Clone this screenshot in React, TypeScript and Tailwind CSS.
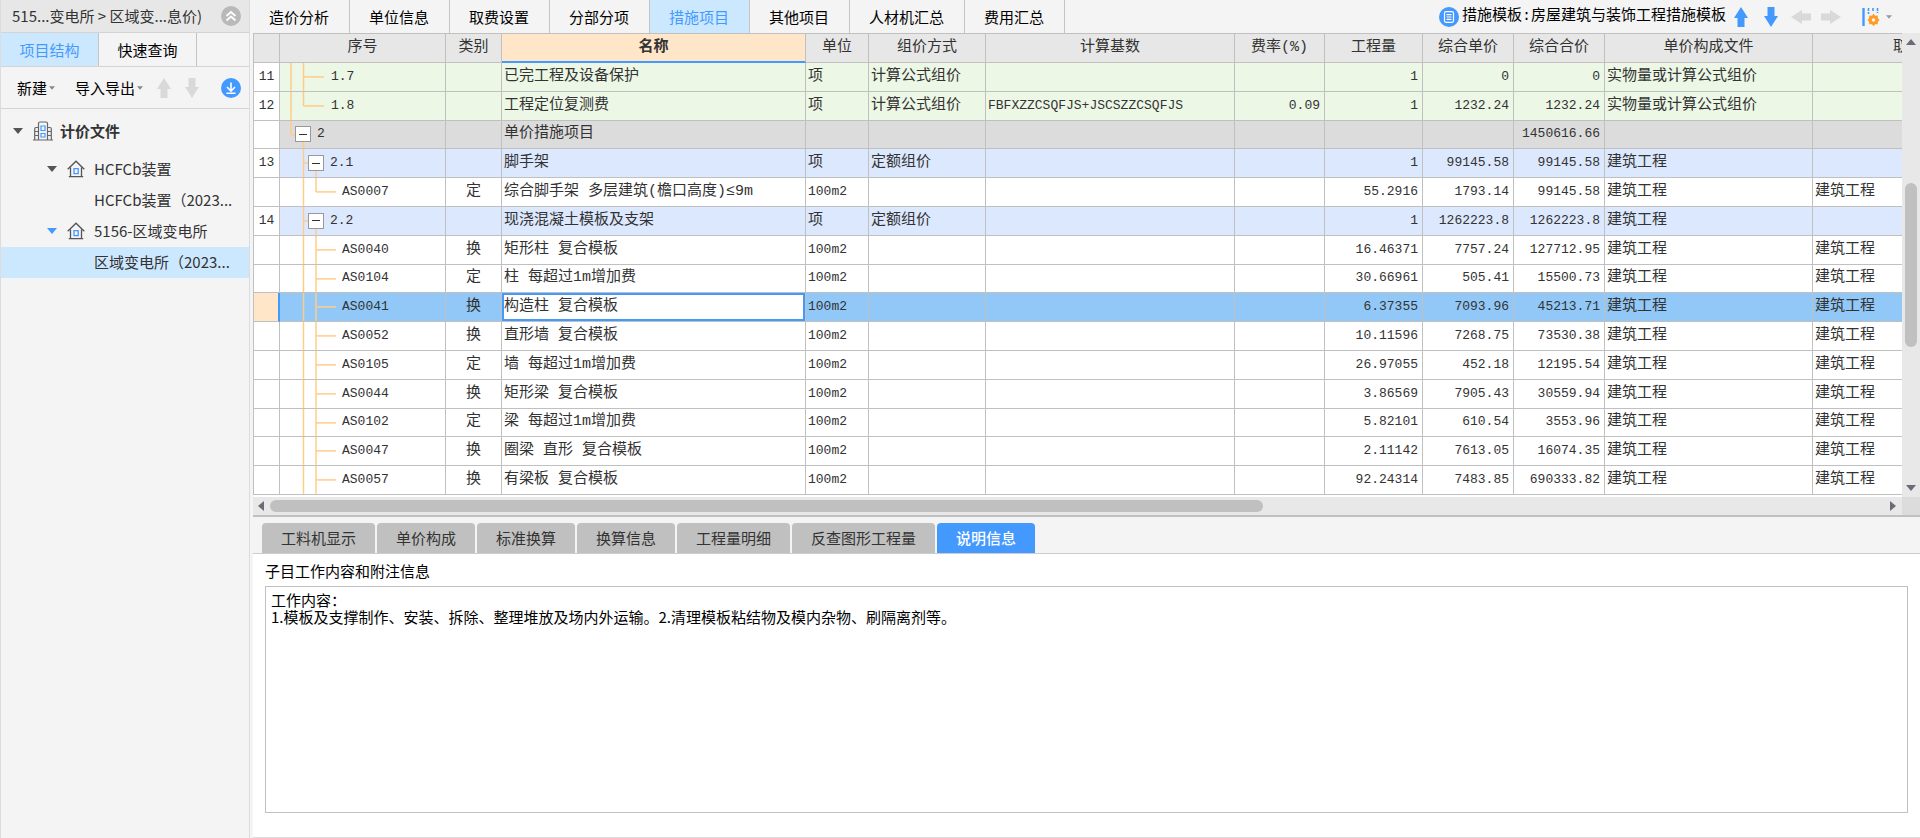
import { ReactNode } from "react";
import clsx from "clsx";

type Level = "leaf1" | "group1" | "group2" | "leaf2";

interface Row {
  no?: string;
  level: Level;
  last?: boolean;
  code: string;
  kind?: string;
  name: string;
  unit?: string;
  method?: string;
  base?: string;
  rate?: string;
  qty?: string;
  price?: string;
  total?: string;
  file?: string;
  fee?: string;
  selected?: boolean;
}

const topTabs = ["造价分析", "单位信息", "取费设置", "分部分项", "措施项目", "其他项目", "人材机汇总", "费用汇总"];

const bottomTabs = ["工料机显示", "单价构成", "标准换算", "换算信息", "工程量明细", "反查图形工程量", "说明信息"];

const headers = [
  "", "序号", "类别", "名称", "单位", "组价方式", "计算基数", "费率(%)",
  "工程量", "综合单价", "综合合价", "单价构成文件", "取费专业",
];

const item = (
  code: string, kind: string, name: string, qty: string, price: string, total: string
): Row => ({
  level: "leaf2", code, kind, name, unit: "100m2", qty, price, total, file: "建筑工程", fee: "建筑工程",
});

const rows: Row[] = [
  { no: "11", level: "leaf1", code: "1.7", name: "已完工程及设备保护", unit: "项", method: "计算公式组价", qty: "1", price: "0", total: "0", file: "实物量或计算公式组价" },
  { no: "12", level: "leaf1", last: true, code: "1.8", name: "工程定位复测费", unit: "项", method: "计算公式组价", base: "FBFXZZCSQFJS+JSCSZZCSQFJS", rate: "0.09", qty: "1", price: "1232.24", total: "1232.24", file: "实物量或计算公式组价" },
  { level: "group1", code: "2", name: "单价措施项目", total: "1450616.66" },
  { no: "13", level: "group2", code: "2.1", name: "脚手架", unit: "项", method: "定额组价", qty: "1", price: "99145.58", total: "99145.58", file: "建筑工程" },
  { ...item("AS0007", "定", "综合脚手架 多层建筑(檐口高度)≤9m", "55.2916", "1793.14", "99145.58"), last: true },
  { no: "14", level: "group2", code: "2.2", name: "现浇混凝土模板及支架", unit: "项", method: "定额组价", qty: "1", price: "1262223.8", total: "1262223.8", file: "建筑工程" },
  item("AS0040", "换", "矩形柱 复合模板", "16.46371", "7757.24", "127712.95"),
  item("AS0104", "定", "柱 每超过1m增加费", "30.66961", "505.41", "15500.73"),
  { ...item("AS0041", "换", "构造柱 复合模板", "6.37355", "7093.96", "45213.71"), selected: true },
  item("AS0052", "换", "直形墙 复合模板", "10.11596", "7268.75", "73530.38"),
  item("AS0105", "定", "墙 每超过1m增加费", "26.97055", "452.18", "12195.54"),
  item("AS0044", "换", "矩形梁 复合模板", "3.86569", "7905.43", "30559.94"),
  item("AS0102", "定", "梁 每超过1m增加费", "5.82101", "610.54", "3553.96"),
  item("AS0047", "换", "圈梁 直形 复合模板", "2.11142", "7613.05", "16074.35"),
  item("AS0057", "换", "有梁板 复合模板", "92.24314", "7483.85", "690333.82"),
];

const rowColors: Record<Level, string> = {
  leaf1: "bg-[#ecf7e6]",
  group1: "bg-[#dcdcdc]",
  group2: "bg-[#dce8fd]",
  leaf2: "bg-white",
};

const indents: Record<Level, string> = {
  leaf1: "pl-[51px]",
  group1: "pl-[15px]",
  group2: "pl-[28px]",
  leaf2: "pl-[62px]",
};

const mono = "font-['Liberation_Mono','Noto_Sans_CJK_SC',monospace]";

function Caret({ className }: { className?: string }) {
  return (
    <svg className={clsx("shrink-0", className)} viewBox="0 0 10 6" fill="currentColor" aria-hidden="true">
      <path d="M0 0h10L5 6z" />
    </svg>
  );
}

function BlockArrow({ className }: { className?: string }) {
  return (
    <svg className={clsx("shrink-0", className)} width="14" height="20" viewBox="0 0 14 20" fill="currentColor" aria-hidden="true">
      <path d="M7 0l7 11h-3.500v9h-7v-9H0z" />
    </svg>
  );
}

function HouseIcon() {
  return (
    <svg className="shrink-0" width="18" height="18" viewBox="0 0 18 18" fill="none" strokeWidth="1.3" aria-hidden="true">
      <path d="M0.700 9.300L9 1.200l8.300 8.100M3.500 7.500v9.200M14.500 7.500v9.200M1.800 16.700h14.400" stroke="#555" />
      <path d="M7 8.700h4.200v5H7z" stroke="#4499ff" />
    </svg>
  );
}

function BuildingIcon() {
  return (
    <svg className="shrink-0" width="20" height="20" viewBox="0 0 20 20" fill="none" strokeWidth="1.2" aria-hidden="true">
      <path d="M0 19h20M5.500 19V2.500Q5.500 1 7 1h6q1.500 0 1.500 1.500V19M5.500 6.500H3Q1.700 6.500 1.700 8v11M14.500 6.500H17q1.300 0 1.300 1.500v11M1.700 10.500h3.800M1.700 14.500h3.800M14.500 10.500h3.800M14.500 14.500h3.800" stroke="#666" />
      <path d="M8 5h4v4.500H8zM8 12.500h4V16H8z" stroke="#4499ff" />
    </svg>
  );
}

/* Connector lines of the tree column */
function TreeLines({ level, last }: { level: Level; last?: boolean }) {
  const end = last ? "50%" : "100%";
  return (
    <svg className="absolute left-0 top-0 h-full w-[62px]" stroke="#ffcc88" strokeWidth="1.5" aria-hidden="true">
      {level === "leaf1" && (
        <>
          <line x1="11" x2="11" y1="0" y2="100%" />
          <line x1="23.500" x2="23.500" y1="0" y2={end} />
          <line x1="23.500" x2="44" y1="50%" y2="50%" />
        </>
      )}
      {level === "group1" && (
        <>
          <line x1="11" x2="11" y1="0" y2="50%" />
          <line x1="11" x2="16" y1="50%" y2="50%" />
          <line x1="23.500" x2="23.500" y1="50%" y2="100%" />
        </>
      )}
      {level === "group2" && (
        <>
          <line x1="23.500" x2="23.500" y1="0" y2="100%" />
          <line x1="23.500" x2="30" y1="50%" y2="50%" />
          <line x1="36" x2="36" y1="50%" y2="100%" />
        </>
      )}
      {level === "leaf2" && (
        <>
          <line x1="23.500" x2="23.500" y1="0" y2="100%" />
          <line x1="36" x2="36" y1="0" y2={end} />
          <line x1="36" x2="56" y1="50%" y2="50%" />
        </>
      )}
    </svg>
  );
}

function Cell({ children, num, center, className }: { children?: ReactNode; num?: boolean; center?: boolean; className?: string }) {
  return (
    <td
      className={clsx(
        "overflow-hidden whitespace-nowrap border-b border-r border-[#c0c0c0] p-0 leading-5",
        num ? "pr-1 text-right text-[13px]" : center ? "text-center" : "pl-0.5",
        className
      )}
    >
      {children}
    </td>
  );
}

function Sidebar() {
  return (
    <aside className="flex w-[250px] shrink-0 flex-col border-x border-[#dcdcdc] bg-[#f4f4f4]">
      <div className="flex h-[33px] items-center justify-between border-b border-[#d4d4d4] bg-[#e7e7e7] pl-[11px] pr-2">
        <span>515...变电所 &gt; 区域变...息价)</span>
        <button aria-label="收起" className="flex size-5 items-center justify-center rounded-full bg-[#b9b9b9] text-white">
          <svg width="12" height="12" viewBox="0 0 12 12" fill="none" stroke="currentColor" strokeWidth="1.8">
            <path d="M1.500 6L6 2l4.500 4M1.500 10.500L6 6.500l4.500 4" />
          </svg>
        </button>
      </div>
      <div className="flex h-[34px] border-b border-[#d4d4d4]">
        <button className="w-[98px] border-r border-[#c4c4c4] bg-[#cce8ff] text-[#4499ff]">项目结构</button>
        <button className="w-[98px] border-r border-[#c4c4c4] text-black">快速查询</button>
      </div>
      <div className="flex h-[42px] items-center border-b border-[#d4d4d4] pl-4 pr-2 text-black">
        <button className="flex items-center gap-0.5">
          新建
          <Caret className="h-1 w-1.5 text-[#888]" />
        </button>
        <button className="ml-5 flex items-center gap-0.5">
          导入导出
          <Caret className="h-1 w-1.5 text-[#888]" />
        </button>
        <button aria-label="上移" className="ml-3.5 text-[#d9d9d9]">
          <BlockArrow />
        </button>
        <button aria-label="下移" className="ml-3.5 text-[#d9d9d9]">
          <BlockArrow className="rotate-180" />
        </button>
        <button aria-label="下载" className="ml-auto flex size-5 items-center justify-center rounded-full bg-[#4499ff] text-white">
          <svg width="12" height="12" viewBox="0 0 12 12" fill="none" stroke="currentColor" strokeWidth="1.6">
            <path d="M6 0.500v8M2 5l4 4 4-4M1.500 11.200h9" />
          </svg>
        </button>
      </div>
      <ul>
        <li className="flex h-[45px] items-center pb-0.5 pl-3 font-bold">
          <Caret className="h-1.5 w-2.5 text-[#555]" />
          <span className="ml-2.5 mr-[7px] flex">
            <BuildingIcon />
          </span>
          计价文件
        </li>
        <li className="flex h-[31px] items-center pb-0.5 pl-[46px]">
          <Caret className="h-1.5 w-2.5 text-[#555]" />
          <span className="ml-2.5 mr-[9px] flex">
            <HouseIcon />
          </span>
          HCFCb装置
        </li>
        <li className="flex h-[31px] items-center pb-0.5 pl-[93px]">HCFCb装置（2023...</li>
        <li className="flex h-[31px] items-center pb-0.5 pl-[46px]">
          <Caret className="h-1.5 w-2.5 text-[#4499ff]" />
          <span className="ml-2.5 mr-[9px] flex">
            <HouseIcon />
          </span>
          5156-区域变电所
        </li>
        <li className="flex h-[31px] items-center bg-[#cce8ff] pb-0.5 pl-[93px]">区域变电所（2023...</li>
      </ul>
    </aside>
  );
}

function TopBar() {
  return (
    <div className="flex h-[33px] items-stretch bg-[#f4f4f4] text-black">
      <nav className="flex">
        {topTabs.map((tab) => (
          <button
            key={tab}
            className={clsx(
              "whitespace-nowrap border-r border-[#c4c4c4] pl-[19px] pr-5",
              tab === "措施项目" && "bg-[#cce8ff] text-[#4499ff]"
            )}
          >
            {tab}
          </button>
        ))}
      </nav>
      <div className="ml-auto flex items-center pr-7">
        <span className="mr-[3px] flex size-5 items-center justify-center rounded-full bg-[#4499ff]">
          <svg width="12" height="12" viewBox="0 0 12 12" fill="none" stroke="#fff" strokeWidth="1.2" aria-hidden="true">
            <rect x="1.500" y="0.700" width="9" height="10.600" rx="1.500" />
            <path d="M3.500 3.700h5M3.500 6h5M3.500 8.300h5" />
          </svg>
        </span>
        <span className={clsx("whitespace-nowrap", mono)}>措施模板:房屋建筑与装饰工程措施模板</span>
        <button aria-label="上移" className="ml-2 text-[#4499ff]">
          <BlockArrow />
        </button>
        <button aria-label="下移" className="ml-4 text-[#4499ff]">
          <BlockArrow className="rotate-180" />
        </button>
        <button aria-label="升级" className="ml-4 text-[#d9d9d9]">
          <BlockArrow className="-rotate-90" />
        </button>
        <button aria-label="降级" className="ml-4 text-[#d9d9d9]">
          <BlockArrow className="rotate-90" />
        </button>
        <button aria-label="列设置" className="ml-6 flex items-center gap-1.5">
          <svg width="18" height="20" viewBox="0 0 18 20" fill="none" aria-hidden="true">
            <path d="M1.500 1v18" stroke="#4499ff" strokeWidth="2.400" />
            <path d="M6.500 1v6M11 1v4M15.500 1v5" stroke="#4499ff" strokeWidth="1.600" strokeDasharray="3 1" />
            <path d="M11.500 6.500l1.500 2.200 2.700-.2.200 2.700 1.600 1.800-1.600 1.800-.2 2.500-2.700-.1-1.500 2-1.500-2-2.700.1-.2-2.500L5.500 13l1.600-1.800.2-2.700 2.700.2z" fill="#ff9a22" />
            <circle cx="11.500" cy="13" r="1.800" fill="#f4f4f4" />
          </svg>
          <Caret className="h-1 w-1.5 text-[#999]" />
        </button>
      </div>
    </div>
  );
}

function CostTable() {
  return (
    <table className={clsx("h-full w-[1781px] table-fixed border-separate border-spacing-0 border-l border-t border-[#c0c0c0]", mono)}>
      <colgroup>
        <col className="w-[26px]" />
        <col className="w-[166px]" />
        <col className="w-[56px]" />
        <col className="w-[304px]" />
        <col className="w-[63px]" />
        <col className="w-[117px]" />
        <col className="w-[249px]" />
        <col className="w-[90px]" />
        <col className="w-[98px]" />
        <col className="w-[91px]" />
        <col className="w-[91px]" />
        <col className="w-[208px]" />
        <col className="w-[221px]" />
      </colgroup>
      <thead>
        <tr className="bg-[#e7e7e7]">
          {headers.map((h, i) => (
            <th
              key={i}
              className={clsx(
                "h-[29px] border-r p-0 leading-5",
                h === "名称"
                  ? "border-b-2 border-b-[#4499ff] border-r-[#c0c0c0] bg-[#ffe6c8] font-bold"
                  : "border-b border-[#c0c0c0] font-normal"
              )}
            >
              {h}
            </th>
          ))}
        </tr>
      </thead>
      <tbody>
        {rows.map((row) => (
          <tr key={row.code} className={row.selected ? "bg-[#92c8f7]" : rowColors[row.level]}>
            <Cell
              center
              className={clsx("text-[13px]", row.selected ? "border-r-2 border-r-[#4499ff] bg-[#ffe6c8]" : "bg-white")}
            >
              {row.no}
            </Cell>
            <Cell className={clsx("relative text-[13px]", indents[row.level])}>
              <TreeLines level={row.level} last={row.last} />
              <div className="relative flex items-center gap-1.5">
                {row.level.startsWith("group") && (
                  <button
                    aria-label="折叠"
                    className="flex size-4 items-center justify-center border border-[#999] bg-white"
                  >
                    <span className="h-px w-2 bg-[#333]" />
                  </button>
                )}
                {row.code}
              </div>
            </Cell>
            <Cell center>{row.kind}</Cell>
            <Cell className={clsx(row.selected && "bg-white shadow-[inset_0_0_0_2px_#4499ff]")}>{row.name}</Cell>
            <Cell className={clsx(row.unit === "100m2" && "text-[13px]")}>{row.unit}</Cell>
            <Cell>{row.method}</Cell>
            <Cell className="text-[13px]">{row.base}</Cell>
            <Cell num>{row.rate}</Cell>
            <Cell num>{row.qty}</Cell>
            <Cell num>{row.price}</Cell>
            <Cell num>{row.total}</Cell>
            <Cell>{row.file}</Cell>
            <Cell>{row.fee}</Cell>
          </tr>
        ))}
      </tbody>
    </table>
  );
}

function GridPane() {
  return (
    <div className="border-b-2 border-[#c0c0c0]">
      <div className="flex h-[464px]">
        <div className="min-w-0 flex-1 overflow-hidden bg-white pb-0.5">
          <CostTable />
        </div>
        <div className="flex w-[18px] flex-col items-center bg-[#e8e8e8] py-1.5 text-[#6b6b78]">
          <Caret className="h-1.5 w-2.5 rotate-180" />
          <div className="mt-[138px] h-[164px] w-3 rounded-full bg-[#c0c0c0]" />
          <Caret className="mt-auto h-1.5 w-2.5" />
        </div>
      </div>
      <div className="flex h-[18px] bg-[#e8e8e8] text-[#6b6b78]">
        <div className="flex min-w-0 flex-1 items-center pl-[3px] pr-1">
          <Caret className="h-1.5 w-2.5 rotate-90" />
          <div className="ml-1 h-3 w-[60.5%] rounded-full bg-[#c0c0c0]" />
          <Caret className="ml-auto h-1.5 w-2.5 -rotate-90" />
        </div>
        <div className="w-[18px] bg-[#dcdcdc]" />
      </div>
    </div>
  );
}

function DetailPane() {
  return (
    <div className="flex flex-1 flex-col border-b border-[#dcdcdc]">
      <div className="flex h-[37px] items-end gap-0.5 border-b border-[#cccccc] bg-[#f4f4f4] pl-[9px]">
        {bottomTabs.map((tab) => (
          <button
            key={tab}
            className={clsx(
              "h-[30px] whitespace-nowrap rounded-t-sm px-[19px]",
              tab === "说明信息" ? "bg-[#4499ff] font-medium text-white" : "bg-[#c0c0c0]"
            )}
          >
            {tab}
          </button>
        ))}
      </div>
      <div className="flex flex-1 flex-col bg-white pb-6 pl-3 pr-3 pt-[7px] text-black">
        <label htmlFor="work-content" className="mb-[5px] leading-5">
          子目工作内容和附注信息
        </label>
        <textarea
          id="work-content"
          readOnly
          className="w-full flex-1 resize-none border border-[#c0c0c0] px-[5px] py-1 leading-[17px] outline-none"
          defaultValue={"工作内容：\n1.模板及支撑制作、安装、拆除、整理堆放及场内外运输。2.清理模板粘结物及模内杂物、刷隔离剂等。"}
        />
      </div>
    </div>
  );
}

export default function App() {
  return (
    <div className="flex min-h-screen bg-[#f4f4f4] font-['Noto_Sans_CJK_SC',sans-serif] text-[15px] leading-5 text-[#333]">
      <Sidebar />
      <main className="flex min-w-0 flex-1 flex-col">
        <TopBar />
        <div className="flex flex-1 flex-col pl-[3px]">
          <GridPane />
          <DetailPane />
        </div>
      </main>
    </div>
  );
}
